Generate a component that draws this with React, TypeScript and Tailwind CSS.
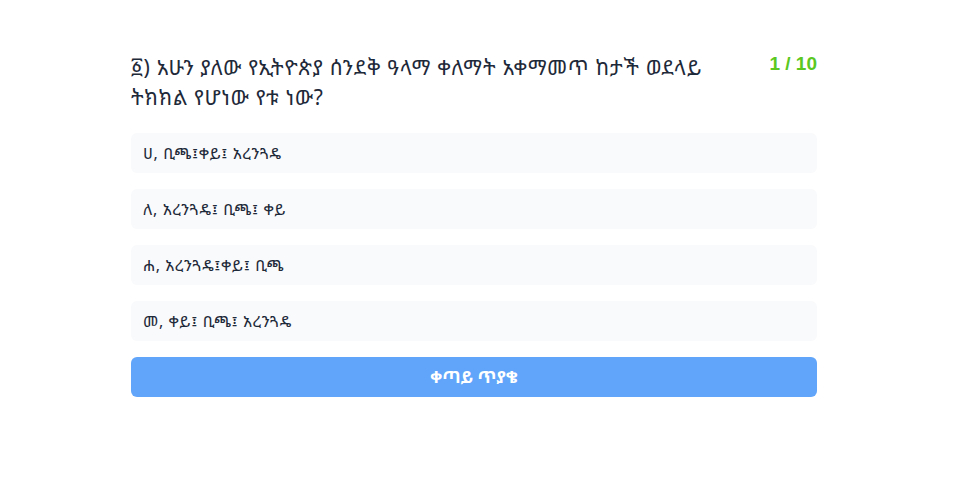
import React, { useState } from 'react';

const options = [
  'ሀ, ቢጫ፤ቀይ፤ አረንጓዴ',
  'ለ, አረንጓዴ፤ ቢጫ፤ ቀይ',
  'ሐ, አረንጓዴ፤ቀይ፤ ቢጫ',
  'መ, ቀይ፤ ቢጫ፤ አረንጓዴ',
];

const App: React.FC = () => {
  const [selected, setSelected] = useState<number | null>(null);

  return (
    <div className="min-h-screen bg-white flex justify-center pr-[9px] pt-[52px] font-['Noto_Sans_Ethiopic','Abyssinica_SIL','DejaVu_Sans',sans-serif]">
      <div className="w-[686px]">
        {/* question header */}
        <div className="flex items-start justify-between gap-4 mb-[21px]">
          <h2 className="flex-1 text-[21px] leading-[30px] tracking-[0.7px] text-gray-800 pr-10">
            ፩) አሁን ያለው የኢትዮጵያ ሰንደቅ ዓላማ ቀለማት አቀማመጥ ከታች ወደላይ ትክክል የሆነው የቱ ነው?
          </h2>
          <span className="text-[19px] font-bold text-[#5ac821] leading-[24px] whitespace-nowrap font-['Liberation_Sans',sans-serif]">
            1 / 10
          </span>
        </div>

        <div className="flex flex-col gap-4">
          {options.map((opt, i) => (
            <button
              key={i}
              onClick={() => setSelected(i)}
              className={`w-full text-left px-3 py-2.5 rounded-md text-[16px] leading-5 tracking-[0.6px] text-gray-800 ${
                selected === i ? 'bg-blue-50' : 'bg-[#f9fafb]'
              }`}
            >
              {opt}
            </button>
          ))}
          <button className="w-full py-2.5 rounded-md bg-[#60a5fa] text-white text-[17px] font-bold leading-5">
            ቀጣይ ጥያቄ
          </button>
        </div>
      </div>
    </div>
  );
};

export default App;
